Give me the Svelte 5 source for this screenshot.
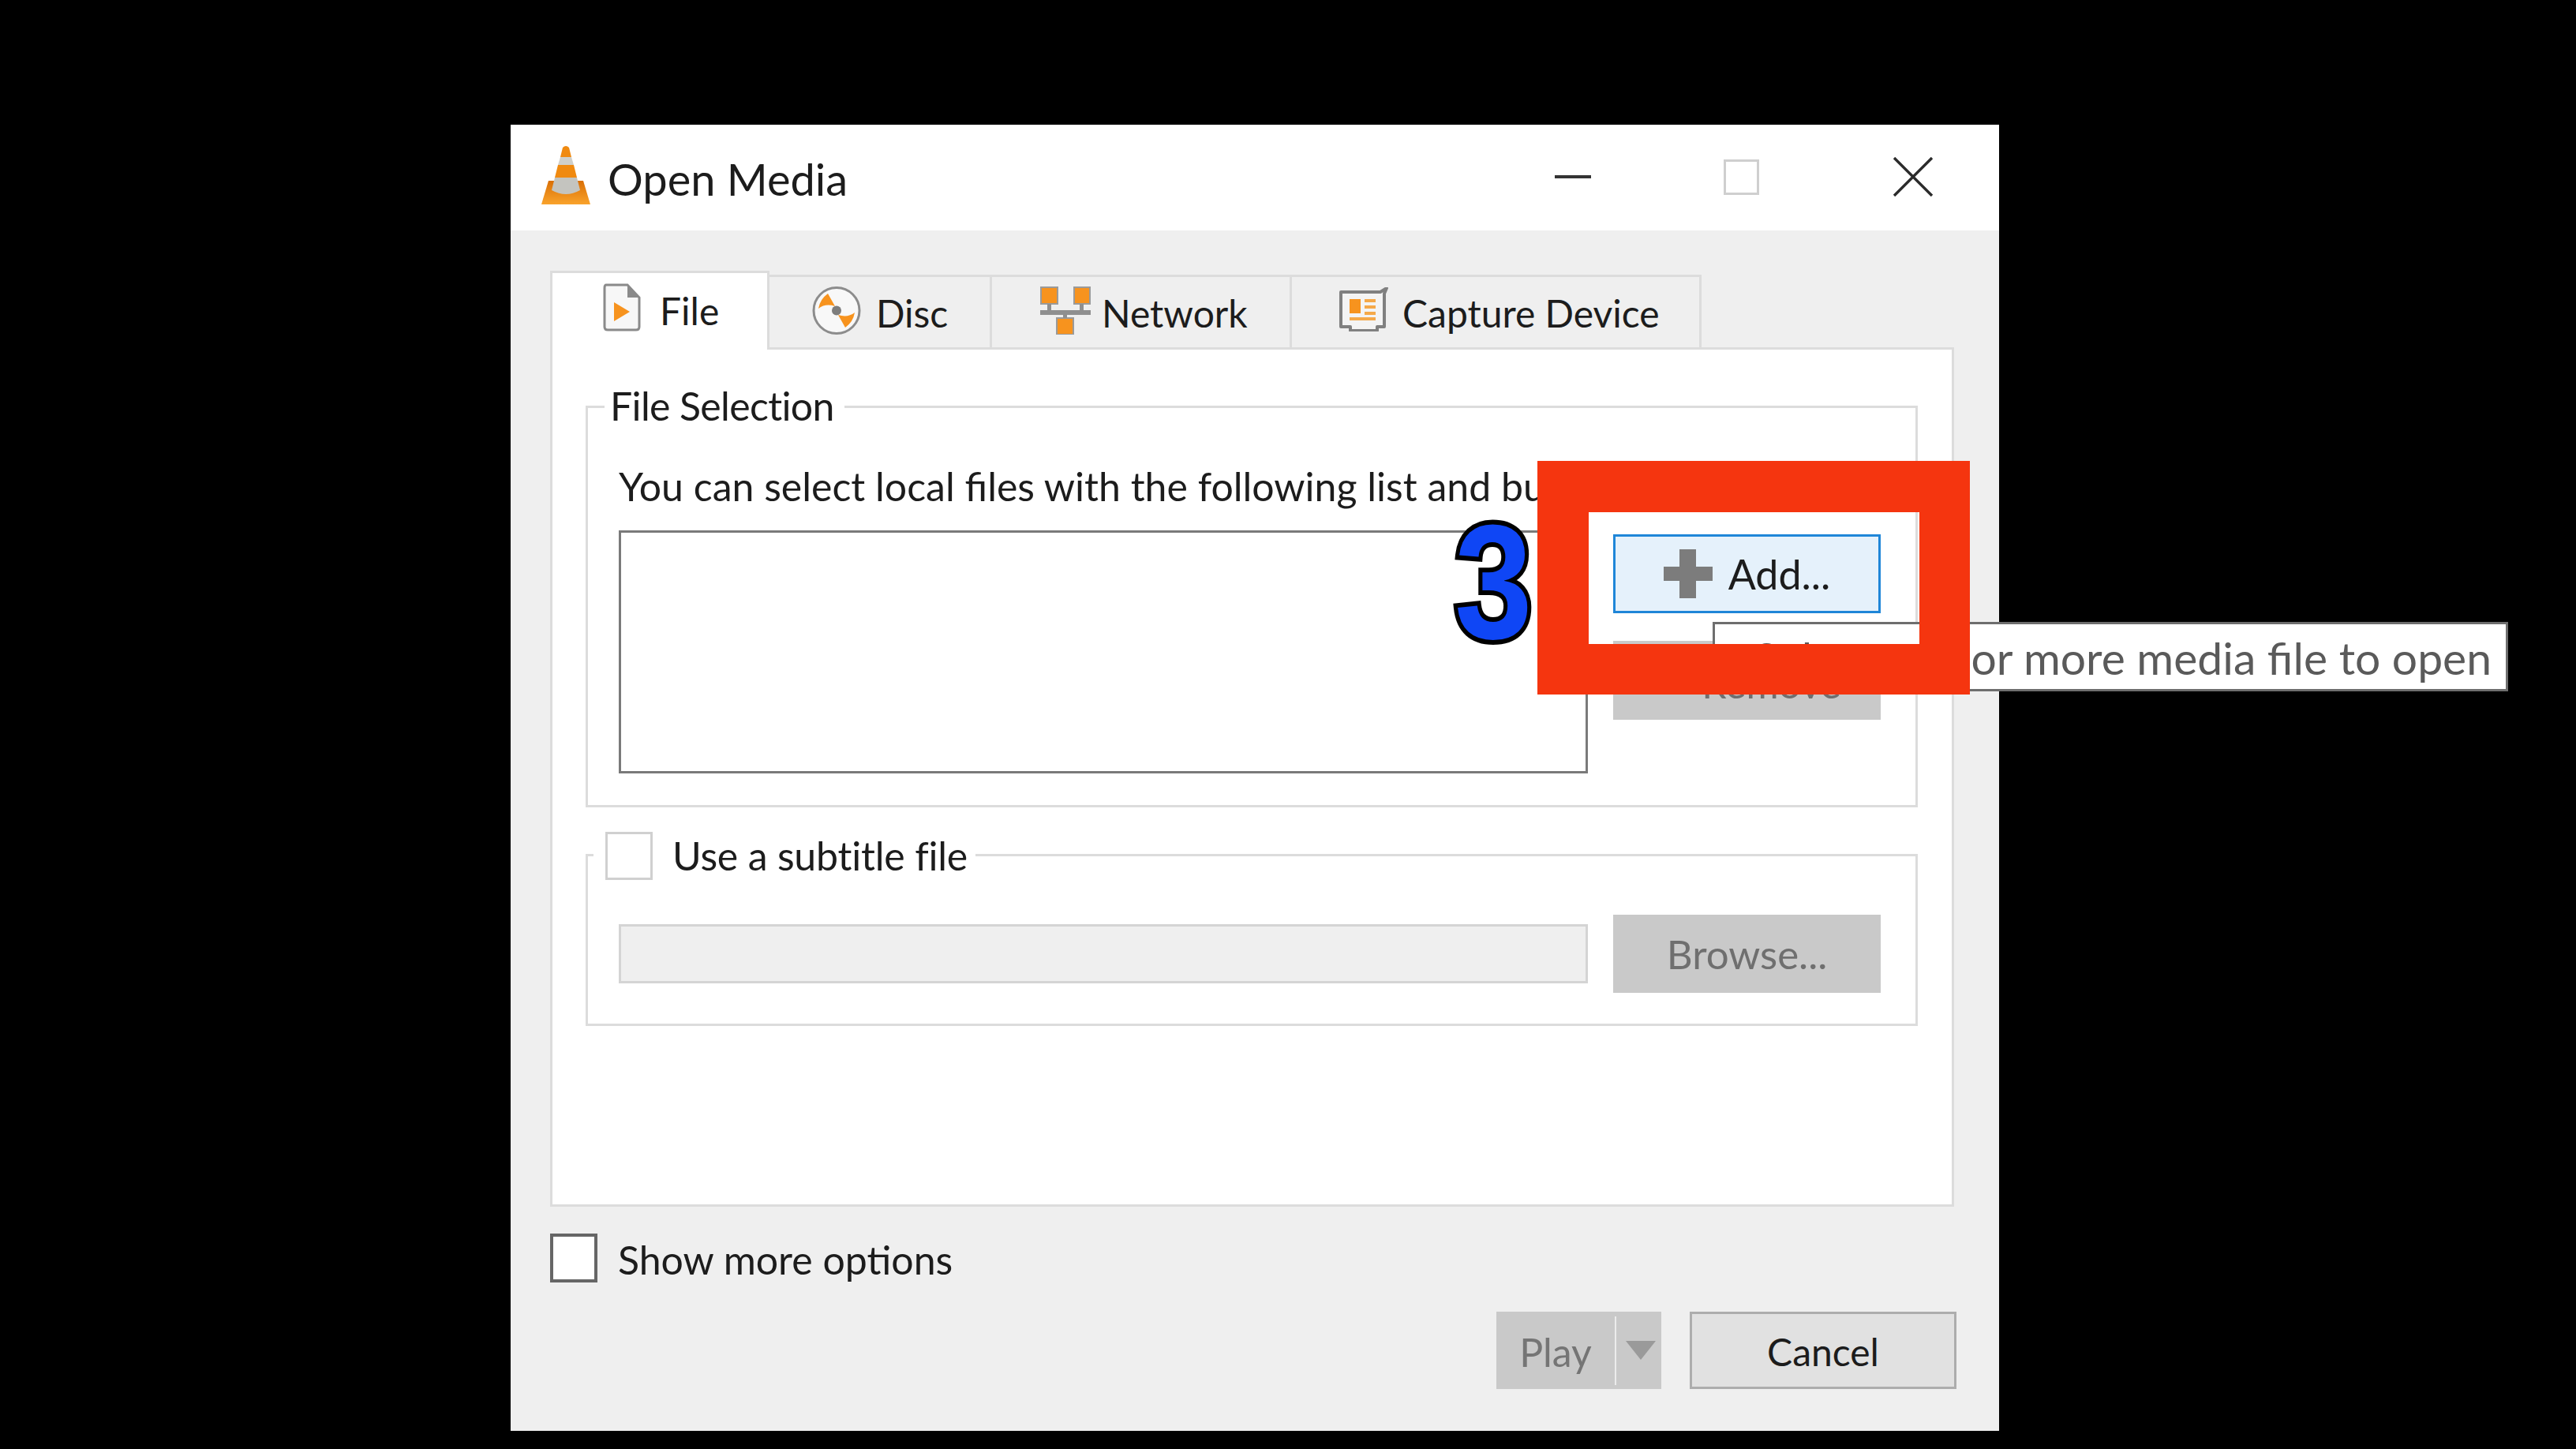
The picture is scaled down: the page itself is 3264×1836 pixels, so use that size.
<script lang="ts">
    const tabs = [
        { id: 'file', label: 'File', active: true },
        { id: 'disc', label: 'Disc', active: false },
        { id: 'network', label: 'Network', active: false },
        { id: 'capture', label: 'Capture Device', active: false }
    ];
</script>

<div class="screen">
    <div class="window">
        <header class="titlebar">
            <svg class="cone" viewBox="0 0 62 74" aria-hidden="true">
                <defs>
                    <linearGradient id="base" x1="0" y1="0" x2="0" y2="1">
                        <stop offset="0" stop-color="#d96f06" />
                        <stop offset="1" stop-color="#f9a32c" />
                    </linearGradient>
                </defs>
                <path d="M9 44 L53 44 L62 74 L0 74 Z" fill="url(#base)" />
                <path d="M27 2 Q31 -2 35 2 L38 14 L24 14 Z" fill="#f08a10" />
                <path d="M24 14 L38 14 L41 24 L21 24 Z" fill="#cfcfca" />
                <path d="M21 24 L41 24 L45 40 L17 40 Z" fill="#f08a10" />
                <path d="M17 40 L45 40 L49 56 Q31 66 13 56 Z" fill="#c4c4bf" />
            </svg>
            <span class="title">Open Media</span>
            <div class="controls">
                <span class="min"></span>
                <span class="max"></span>
                <svg class="close" viewBox="0 0 52 50" aria-hidden="true">
                    <path d="M2 1 L50 49 M50 1 L2 49" stroke="#2b2b2b" stroke-width="3.4" fill="none" />
                </svg>
            </div>
        </header>

        <div class="body">
            <div class="tabs">
                {#each tabs as tab}
                    <div class="tab {tab.id}" class:active={tab.active}>
                        {#if tab.id === 'file'}
                            <svg class="icon" width="48" height="61" viewBox="0 0 48 61" aria-hidden="true">
                                <path d="M4 2 H31 L46 18 V55 Q46 59 42 59 H6 Q2 59 2 55 V6 Q2 2 4 2 Z" fill="#f7f7f7" stroke="#8a8a8a" stroke-width="3" />
                                <path d="M31 2 L46 18 H31 Z" fill="#8a8a8a" />
                                <path d="M14 24 L34 36 L14 48 Z" fill="#f7931e" />
                            </svg>
                        {:else if tab.id === 'disc'}
                            <svg class="icon" width="62" height="61" viewBox="0 0 62 61" aria-hidden="true">
                                <circle cx="31" cy="30.5" r="29" fill="#f8f8f8" stroke="#8c8c8c" stroke-width="3" />
                                <path d="M8 28 Q10 16 20 9 L29 25 Q17 21 8 28 Z" fill="#f7931e" />
                                <path d="M54 33 Q52 45 42 52 L33 36 Q45 40 54 33 Z" fill="#f7931e" />
                                <circle cx="31" cy="30.5" r="6" fill="#7d7d7d" />
                            </svg>
                        {:else if tab.id === 'network'}
                            <svg class="icon" width="64" height="61" viewBox="0 0 64 61" aria-hidden="true">
                                <rect x="1" y="1" width="21" height="21" fill="#f7931e" stroke="#9a9a9a" stroke-width="2" />
                                <rect x="43" y="1" width="20" height="21" fill="#f7931e" stroke="#9a9a9a" stroke-width="2" />
                                <rect x="21" y="40" width="21" height="21" fill="#f7931e" stroke="#9a9a9a" stroke-width="2" />
                                <path d="M0 30 H64 V36 H0 Z M9 22 H14 V30 H9 Z M50 22 H55 V30 H50 Z M29 36 H34 V40 H29 Z" fill="#8f8f8f" />
                            </svg>
                        {:else}
                            <svg class="icon" width="62" height="56" viewBox="0 0 62 56" aria-hidden="true">
                                <path d="M2 6 H52 L60 1 L57 8 V50 H48 V55 H14 V50 H2 Z" fill="#f4f4f4" stroke="#808080" stroke-width="4" stroke-linejoin="round" />
                                <rect x="13" y="15" width="14" height="18" fill="#f7931e" />
                                <path d="M32 15 H46 V19 H32 Z M32 23 H46 V27 H32 Z M32 31 H46 V35 H32 Z M13 38 H46 V42 H13 Z" fill="#f5a94a" />
                            </svg>
                        {/if}
                        <span>{tab.label}</span>
                    </div>
                {/each}
            </div>

            <div class="panel">
                <section class="group selection">
                    <div class="legend">File Selection</div>
                    <p class="hint">You can select local files with the following list and buttons.</p>
                    <div class="row">
                        <div class="listbox"></div>
                        <div class="side">
                            <button class="btn add">
                                <svg width="62" height="62" viewBox="0 0 62 62" aria-hidden="true">
                                    <path d="M20 0 H41 V22 H62 V40 H41 V62 H20 V40 H0 V22 H20 Z" fill="#7c7c7c" />
                                </svg>
                                Add...
                            </button>
                            <button class="btn off remove">Remove</button>
                        </div>
                    </div>
                </section>

                <section class="group subtitle">
                    <div class="legend with-check">
                        <span class="check light"></span>
                        Use a subtitle file
                    </div>
                    <div class="row sub-row">
                        <div class="field"></div>
                        <button class="btn off browse">Browse...</button>
                    </div>
                </section>
            </div>

            <div class="more">
                <span class="check dark"></span>
                <span class="more-label">Show more options</span>
            </div>

            <div class="actions">
                <div class="play">
                    <span class="play-label">Play</span>
                    <span class="sep"></span>
                    <span class="arrow"></span>
                </div>
                <button class="btn cancel">Cancel</button>
            </div>
        </div>
    </div>

    <div class="tooltip">Select one or more media file to open</div>
    <div class="frame"></div>
    <div class="step">3</div>
</div>

<style>
    :global(body) {
        margin: 0;
        background: #000;
    }

    .screen {
        position: relative;
        width: 3264px;
        height: 1836px;
        box-sizing: border-box;
        padding: 158px 0 0 647px;
        background: #000;
        overflow: hidden;
        font-family: 'Lato', sans-serif;
        font-size: 50px;
        color: #1c1c1c;
    }

    .window {
        width: 1886px;
        height: 1655px;
        display: flex;
        flex-direction: column;
        background: #efefef;
    }

    .titlebar {
        height: 134px;
        flex: none;
        display: flex;
        align-items: center;
        background: #fff;
        padding-left: 39px;
    }

    .cone {
        width: 62px;
        height: 74px;
        margin-top: -6px;
    }

    .title {
        margin-left: 22px;
        font-size: 56px;
        margin-top: 2px;
    }

    .controls {
        margin-left: auto;
        display: flex;
        align-items: center;
        padding-right: 83px;
    }

    .min {
        width: 46px;
        height: 4px;
        background: #333;
        margin-top: -2px;
    }

    .max {
        width: 39px;
        height: 39px;
        border: 3px solid #cfcfcf;
        margin-left: 168px;
        margin-top: -2px;
    }

    .close {
        width: 52px;
        height: 50px;
        margin-left: 169px;
        margin-top: -2px;
    }

    .body {
        flex: 1;
        padding: 51px 57px 0 50px;
        position: relative;
    }

    .tabs {
        display: flex;
        align-items: flex-end;
        height: 100px;
    }

    .tab {
        height: 89px;
        display: flex;
        align-items: center;
        border: 3px solid #dcdcdc;
        border-left: 0;
        font-size: 48px;
        box-sizing: content-box;
        background: #efefef;
    }

    .tab.active {
        height: 97px;
        border-left: 3px solid #dcdcdc;
        border-bottom: 0;
        background: #fff;
        position: relative;
        z-index: 1;
    }

    .file { width: 272px; }
    .disc { width: 279px; }
    .network { width: 377px; }
    .capture { width: 516px; }

    .file .icon { margin-left: 64px; margin-top: -10px; }
    .file span { margin-left: 24px; margin-top: -2px; }
    .disc .icon { margin-left: 54px; margin-top: -4px; }
    .disc span { margin-left: 19px; margin-top: 2px; }
    .network .icon { margin-left: 61px; margin-top: -4px; }
    .network span { margin-left: 14px; margin-top: 2px; }
    .capture .icon { margin-left: 60px; margin-top: -8px; }
    .capture span { margin-left: 18px; margin-top: 2px; }

    .panel {
        width: 1779px;
        height: 1089px;
        box-sizing: border-box;
        margin-top: -3px;
        padding: 71px 43px 0 42px;
        background: #fff;
        border: 3px solid #dcdcdc;
    }

    .group {
        border: 3px solid #dcdcdc;
        box-sizing: border-box;
        padding: 0 44px 0 39px;
    }

    .selection {
        height: 509px;
    }

    .subtitle {
        height: 218px;
        margin-top: 59px;
    }

    .legend {
        width: fit-content;
        height: 60px;
        line-height: 56px;
        margin: -31px 0 0 -18px;
        padding: 0 13px 0 7px;
        background: #fff;
        letter-spacing: -0.65px;
    }

    .with-check {
        display: flex;
        align-items: center;
        gap: 25px;
        margin-left: -32px;
        padding: 0 10px 0 15px;
        letter-spacing: -0.2px;
    }

    .hint {
        margin: 39px 0 0;
        height: 62px;
        line-height: 62px;
        white-space: nowrap;
    }

    .row {
        display: flex;
        gap: 32px;
    }

    .selection .row {
        margin-top: 25px;
    }

    .listbox {
        width: 1228px;
        height: 308px;
        flex: none;
        box-sizing: border-box;
        border: 3px solid #7a7a7a;
        background: #fff;
    }

    .side {
        display: flex;
        flex-direction: column;
        gap: 35px;
        padding-top: 5px;
    }

    .btn {
        width: 339px;
        height: 100px;
        flex: none;
        box-sizing: border-box;
        display: flex;
        align-items: center;
        justify-content: center;
        font: inherit;
        color: #1c1c1c;
        padding: 0;
        border: 3px solid transparent;
    }

    .add {
        background: #e5f1fb;
        border-color: #1f86d8;
        gap: 20px;
        font-size: 52px;
    }

    .remove {
        padding: 8px 0 0 62px;
    }

    .off {
        background: #c9c9c9;
        border-color: #c9c9c9;
        color: #6f6f6f;
    }

    .sub-row {
        margin-top: 45px;
        align-items: center;
    }

    .field {
        width: 1228px;
        height: 75px;
        flex: none;
        box-sizing: border-box;
        border: 3px solid #d4d4d4;
        background: #efefef;
    }

    .browse {
        height: 99px;
        font-size: 51px;
    }

    .check {
        display: block;
        flex: none;
        box-sizing: border-box;
        background: #fff;
    }

    .check.light {
        width: 60px;
        height: 61px;
        border: 3px solid #d0d0d0;
    }

    .check.dark {
        width: 60px;
        height: 62px;
        border: 4px solid #666;
    }

    .more {
        display: flex;
        align-items: center;
        gap: 26px;
        margin-top: 34px;
        height: 62px;
    }

    .more-label {
        margin-top: 3px;
    }

    .actions {
        display: flex;
        justify-content: flex-end;
        gap: 36px;
        margin-top: 37px;
        margin-right: -3px;
    }

    .play {
        width: 209px;
        height: 98px;
        display: flex;
        align-items: center;
        background: #c9c9c9;
        color: #757575;
    }

    .play-label {
        width: 150px;
        text-align: center;
        padding-top: 3px;
    }

    .sep {
        width: 2px;
        height: 87px;
        background: #ececec;
    }

    .arrow {
        margin-left: 12px;
        border-left: 19px solid transparent;
        border-right: 19px solid transparent;
        border-top: 24px solid #9a9a9a;
    }

    .cancel {
        width: 338px;
        height: 98px;
        background: #e1e1e1;
        border-color: #adadad;
        font-size: 48px;
        padding-top: 3px;
    }

    .tooltip {
        position: absolute;
        left: 2170px;
        top: 788px;
        width: 1008px;
        height: 88px;
        box-sizing: border-box;
        border: 3px solid #6e6e6e;
        background: #fff;
        color: #5a5a5a;
        font-size: 57px;
        text-align: right;
        padding-right: 18px;
        line-height: 84px;
        white-space: nowrap;
    }

    .frame {
        position: absolute;
        left: 1948px;
        top: 584px;
        width: 548px;
        height: 296px;
        box-sizing: border-box;
        border: solid #f5350f;
        border-width: 65px 64px 64px 65px;
        background: transparent;
    }

    .step {
        position: absolute;
        left: 1843px;
        top: 620px;
        font-family: 'Liberation Sans', sans-serif;
        font-weight: 700;
        font-size: 206px;
        line-height: 236px;
        color: #0f46f5;
        -webkit-text-stroke: 12px #000;
        paint-order: stroke fill;
        transform: scaleX(0.86);
        transform-origin: left center;
    }
</style>
